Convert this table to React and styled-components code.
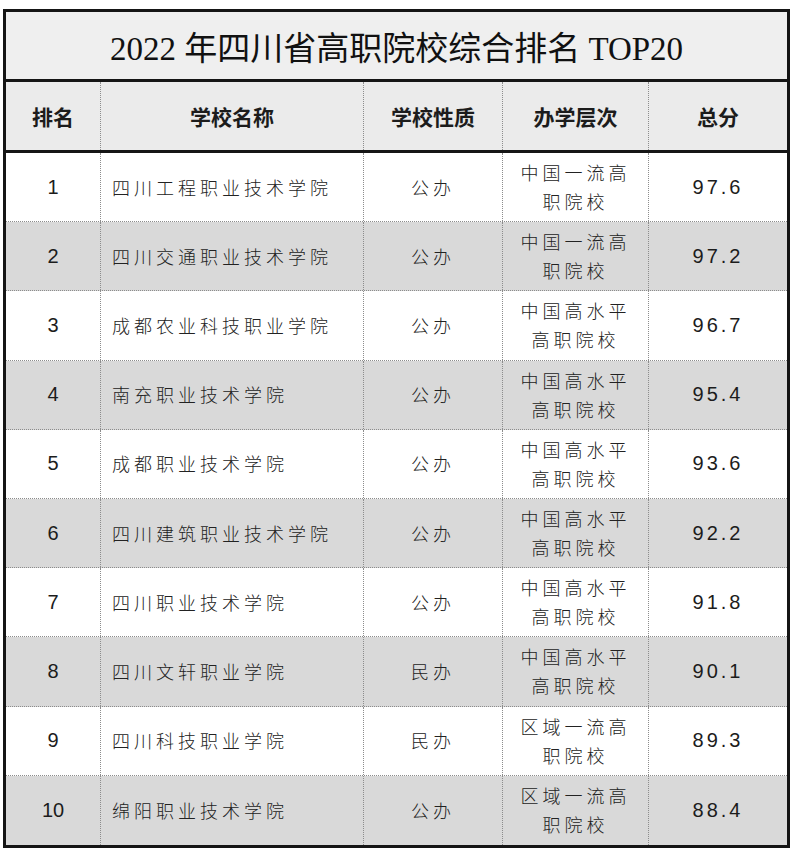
import React from 'react';
import styled, { createGlobalStyle } from 'styled-components';

const GlobalStyle = createGlobalStyle`
  body {
    margin: 0;
    background: #ffffff;
    font-family: "Noto Sans CJK SC", "Liberation Sans", sans-serif;
  }
  *, *::before, *::after {
    box-sizing: border-box;
  }
`;

const rows = [
  { rank: 1, name: '四川工程职业技术学院', type: '公办', level: ['中国一流高', '职院校'], score: '97.6' },
  { rank: 2, name: '四川交通职业技术学院', type: '公办', level: ['中国一流高', '职院校'], score: '97.2' },
  { rank: 3, name: '成都农业科技职业学院', type: '公办', level: ['中国高水平', '高职院校'], score: '96.7' },
  { rank: 4, name: '南充职业技术学院', type: '公办', level: ['中国高水平', '高职院校'], score: '95.4' },
  { rank: 5, name: '成都职业技术学院', type: '公办', level: ['中国高水平', '高职院校'], score: '93.6' },
  { rank: 6, name: '四川建筑职业技术学院', type: '公办', level: ['中国高水平', '高职院校'], score: '92.2' },
  { rank: 7, name: '四川职业技术学院', type: '公办', level: ['中国高水平', '高职院校'], score: '91.8' },
  { rank: 8, name: '四川文轩职业学院', type: '民办', level: ['中国高水平', '高职院校'], score: '90.1' },
  { rank: 9, name: '四川科技职业学院', type: '民办', level: ['区域一流高', '职院校'], score: '89.3' },
  { rank: 10, name: '绵阳职业技术学院', type: '公办', level: ['区域一流高', '职院校'], score: '88.4' },
];

const Table = styled.div`
  margin: 9px 0 0 3px;
  width: 787px;
  border: 3px solid #151515;
  color: #1a1a1a;
`;

const Title = styled.div`
  height: 70px;
  display: flex;
  align-items: center;
  justify-content: center;
  background: #efefef;
  border-bottom: 3px solid #151515;
  font-family: "Liberation Serif", "Noto Sans CJK SC", serif;
  font-size: 33px;
  color: #111;
`;

const Row = styled.div`
  display: grid;
  grid-template-columns: 94px 263px 139px 146px 1fr;
  height: ${p => p.$h}px;
  background: ${p => p.$bg};
  border-bottom: ${p => p.$line};
`;

const Cell = styled.div`
  display: flex;
  align-items: center;
  justify-content: ${p => (p.$left ? 'flex-start' : 'center')};
  padding-left: ${p => (p.$left ? '11px' : '0')};
  border-left: ${p => (p.$first ? 'none' : '1px dotted #8c8c8c')};
  text-align: center;
`;

const HeadText = styled.span`
  font-family: "Noto Sans CJK SC", sans-serif;
  font-weight: 700;
  font-size: 21px;
  color: #1c1c1c;
`;

const Num = styled.span`
  font-family: "Liberation Sans", Arial, sans-serif;
  font-size: 20px;
  color: #1c1c1c;
  letter-spacing: ${p => (p.$spaced ? '3px' : '0')};
`;

const Kai = styled.span`
  font-family: "Noto Sans CJK SC", sans-serif;
  font-weight: 300;
  font-size: 18px;
  letter-spacing: 4px;
  line-height: 29px;
  color: #222;
`;

export default function App() {
  return (
    <>
      <GlobalStyle />
      <Table>
        <Title>2022 年四川省高职院校综合排名 TOP20</Title>
        <Row $h={71} $bg="#ebebeb" $line="3px solid #151515">
          <Cell $first><HeadText>排名</HeadText></Cell>
          <Cell><HeadText>学校名称</HeadText></Cell>
          <Cell><HeadText>学校性质</HeadText></Cell>
          <Cell><HeadText>办学层次</HeadText></Cell>
          <Cell><HeadText>总分</HeadText></Cell>
        </Row>
        {rows.map((r, i) => (
          <Row
            key={r.rank}
            $h={69.2}
            $bg={i % 2 === 1 ? '#d9d9d9' : '#ffffff'}
            $line={i === rows.length - 1 ? 'none' : '1px dotted #8c8c8c'}
          >
            <Cell $first><Num>{r.rank}</Num></Cell>
            <Cell $left><Kai>{r.name}</Kai></Cell>
            <Cell><Kai>{r.type}</Kai></Cell>
            <Cell>
              <Kai>
                {r.level[0]}
                <br />
                {r.level[1]}
              </Kai>
            </Cell>
            <Cell><Num $spaced>{r.score}</Num></Cell>
          </Row>
        ))}
      </Table>
    </>
  );
}
